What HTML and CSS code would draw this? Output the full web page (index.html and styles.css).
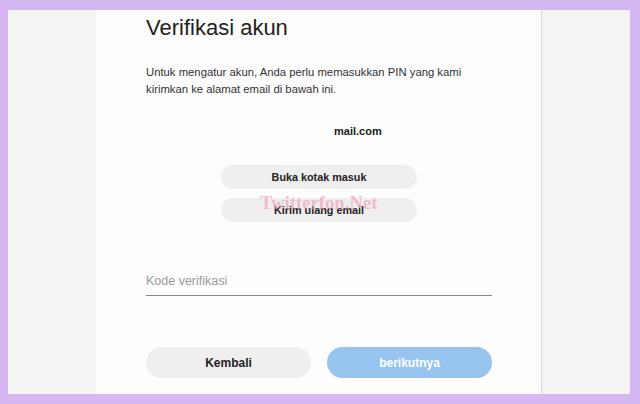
FILE: index.html
```html
<!DOCTYPE html>
<html>
<head>
  <title>Verifikasi akun</title>
  <link rel="stylesheet" href="styles.css">
</head>
<body>
  <div class="frame">
    <div class="side"></div>

    <div class="panel">
      <h1 class="title">Verifikasi akun</h1>
      <p class="intro">Untuk mengatur akun, Anda perlu memasukkan PIN yang kami kirimkan ke alamat email di bawah ini.</p>

      <div class="email">mail.com</div>

      <div class="mail-actions">
        <button class="pill">Buka kotak masuk</button>
        <button class="pill">Kirim ulang email</button>
      </div>

      <input type="text" class="code-input" placeholder="Kode verifikasi">

      <div class="nav">
        <button class="nav-btn back">Kembali</button>
        <button class="nav-btn next">berikutnya</button>
      </div>

      <div class="watermark">Twitterfon.Net</div>
    </div>

    <div class="side side-right"></div>
  </div>
</body>
</html>
```

FILE: styles.css
```css
* {
  box-sizing: border-box;
}

body {
  margin: 0;
  background: #d5b8f2;
  font-family: "Liberation Sans", Arial, sans-serif;
  color: #222;
}

.frame {
  display: flex;
  height: 384px;
  margin: 10px 10px 10px 8px;
  background: #f4f4f4;
}

.side {
  width: 88px;
}

.side-right {
  flex: 1;
}

.panel {
  position: relative;
  width: 446px;
  padding: 0 49px 0 50px;
  background: #fdfdfd;
  border-right: 1px solid #d9d9d9;
}

.title {
  margin: 5px 0 0;
  font-size: 22px;
  font-weight: normal;
  line-height: 25px;
  color: #222;
}

.intro {
  margin: 24px 0 0;
  font-size: 11.3px;
  line-height: 16.5px;
  color: #333;
}

.email {
  margin-top: 26px;
  padding-left: 188px;
  font-size: 11px;
  font-weight: bold;
  line-height: 16px;
  color: #1a1a1a;
}

.mail-actions {
  display: flex;
  flex-direction: column;
  align-items: center;
  gap: 9px;
  margin-top: 26px;
}

.pill {
  width: 196px;
  height: 24px;
  border: none;
  border-radius: 12px;
  background: #efefef;
  font-family: inherit;
  font-size: 10.8px;
  font-weight: bold;
  color: #222;
}

.code-input {
  display: block;
  width: 100%;
  height: 23px;
  margin-top: 51px;
  padding: 0 0 6px;
  border: none;
  border-bottom: 1px solid #8a8a8a;
  background: transparent;
  font-family: inherit;
  font-size: 12.5px;
  line-height: 16px;
  outline: none;
}

.code-input::placeholder {
  color: #9a9a9a;
}

.nav {
  display: flex;
  gap: 16px;
  margin-top: 51px;
}

.nav-btn {
  flex: 1;
  height: 31px;
  border: none;
  border-radius: 16px;
  font-family: inherit;
  font-size: 12px;
  font-weight: bold;
}

.back {
  background: #efefef;
  color: #222;
}

.next {
  background: #96c4ef;
  color: #fff;
}

/* watermark stamped over the screenshot */
.watermark {
  position: absolute;
  left: 164px;
  top: 183px;
  font-family: "Liberation Serif", serif;
  font-size: 18.7px;
  font-weight: bold;
  line-height: 19px;
  color: rgba(240, 150, 180, 0.6);
  pointer-events: none;
}
```
